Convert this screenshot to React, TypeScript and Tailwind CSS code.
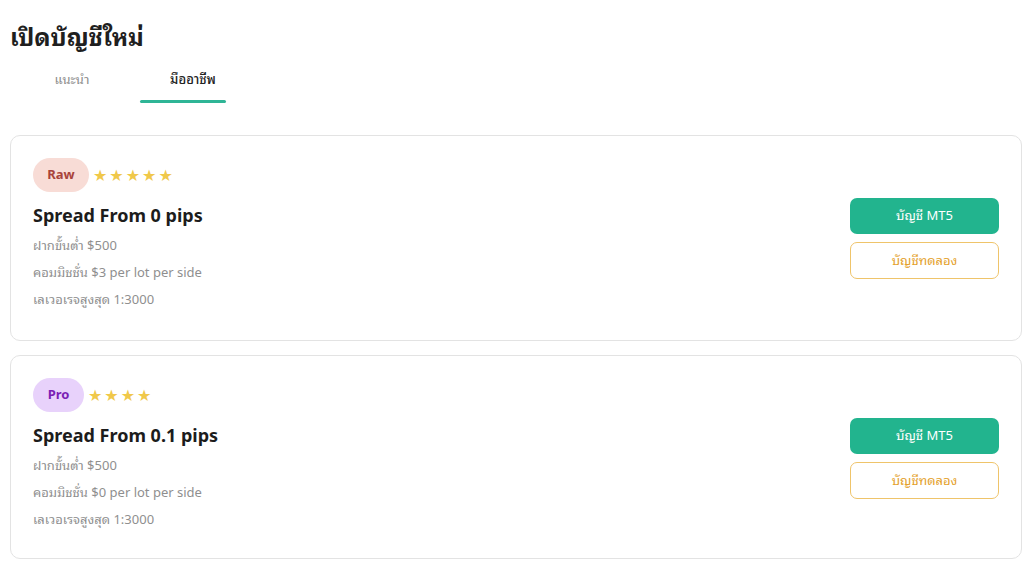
import React from "react";

const font = { fontFamily: '"Noto Sans", "Noto Sans Thai Looped", "Noto Sans Thai", "DejaVu Sans", sans-serif' };

function Stars({ n }: { n: number }) {
  return (
    <div className="flex items-center gap-[2px] text-[#f0c84a] text-[16px] leading-none">
      {Array.from({ length: n }).map((_, i) => (
        <span key={i}>★</span>
      ))}
    </div>
  );
}

function Card({
  badge,
  badgeCls,
  stars,
  title,
  commission,
  pb,
}: {
  badge: string;
  badgeCls: string;
  stars: number;
  title: string;
  commission: string;
  pb: string;
}) {
  return (
    <div className={`ml-[10px] mr-[2px] rounded-[10px] border border-[#e3e3e3] bg-white pl-[22px] pr-[22px] pt-[22px] ${pb} flex items-center justify-between`}>
      <div className="flex flex-col">
        <div className="flex items-center gap-[4px]">
          <span className={`h-[34px] rounded-full flex items-center justify-center text-[13px] font-bold ${badgeCls}`}>
            {badge}
          </span>
          <Stars n={stars} />
        </div>
        <div className="mt-[10px] text-[18px] font-bold text-[#1c1c1c] leading-[26px]">{title}</div>
        <div className="mt-[8px] flex flex-col gap-[8px] text-[13px] text-[#8f8f8f] leading-[19px]">
          <div>ฝากขั้นต่ำ $500</div>
          <div>{commission}</div>
          <div>เลเวอเรจสูงสุด 1:3000</div>
        </div>
      </div>
      <div className="mt-[10px] flex flex-col gap-[8px] w-[149px]">
        <button className="h-[36px] rounded-[7px] bg-[#22b48e] text-white text-[13px]">บัญชี MT5</button>
        <button className="h-[37px] rounded-[7px] border border-[#efc46a] bg-white text-[#e4a12c] text-[13px]">
          บัญชีทดลอง
        </button>
      </div>
    </div>
  );
}

export default function App() {
  return (
    <div className="w-[1024px] h-[576px] bg-white overflow-hidden" style={font}>
      <h1 className="pl-[10px] pt-[21px] text-[24px] font-bold text-[#1f1f1f] leading-[32px]">เปิดบัญชีใหม่</h1>
      <div className="flex pl-[10px] mt-[14px]">
        <div className="w-[124px] h-[36px] flex items-start justify-center pt-[3px] text-[13px] text-[#8c8c8c]">แนะนำ</div>
        <div className="ml-[6px] w-[86px] h-[36px] flex flex-col items-center">
          <div className="pt-[3px] pl-[20px] text-[13px] text-[#222] font-medium">มืออาชีพ</div>
          <div className="mt-auto w-full h-[3px] rounded-full bg-[#2fb596]" />
        </div>
      </div>
      <div className="mt-[32px] flex flex-col gap-[14px]">
        <Card
          badge="Raw"
          badgeCls="w-[56px] bg-[#f8dcd6] text-[#a8433b]"
          stars={5}
          title="Spread From 0 pips"
          commission="คอมมิชชั่น $3 per lot per side"
          pb="pb-[31px]"
        />
        <Card
          badge="Pro"
          badgeCls="w-[51px] bg-[#e8d2fb] text-[#7b1fb5]"
          stars={4}
          title="Spread From 0.1 pips"
          commission="คอมมิชชั่น $0 per lot per side"
          pb="pb-[29px]"
        />
      </div>
    </div>
  );
}
